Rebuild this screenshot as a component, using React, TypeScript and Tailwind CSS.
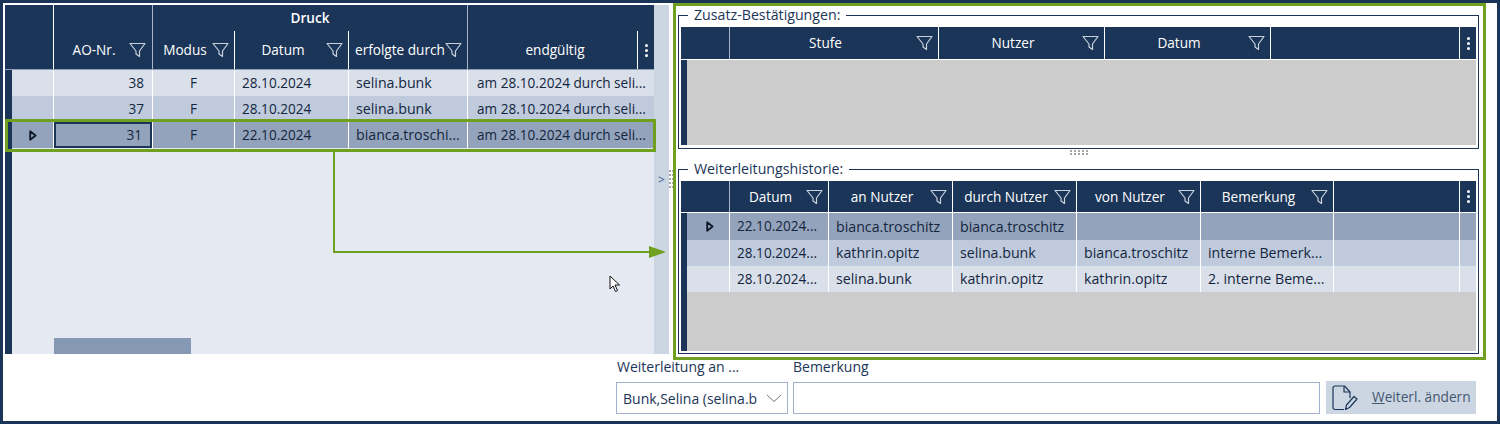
const FilterIcon = () => (
  <svg width="17" height="16" viewBox="0 0 17 16" fill="none" className="shrink-0 -ml-[5px] mr-[5px]">
    <path d="M1 1.500h15L10.500 9v5.500L7 12V9z" stroke="#c9d1dc" strokeWidth="1.2" strokeLinejoin="round" />
  </svg>
);

const MenuDots = () => (
  <div className="flex w-full h-full flex-col items-center justify-center gap-[2px]">
    <span className="w-[3px] h-[3px] bg-white rounded-full" />
    <span className="w-[3px] h-[3px] bg-white rounded-full" />
    <span className="w-[3px] h-[3px] bg-white rounded-full" />
  </div>
);

const RowMarker = () => (
  <svg width="8" height="11" viewBox="0 0 8 11" fill="none">
    <path d="M1.200 1.200v8.600L6.600 5.500z" stroke="#111827" strokeWidth="1.800" strokeLinejoin="round" />
  </svg>
);

const HeadCell = ({ label, w, filter = true, sep = 'border-white' }: { label: string; w: number; filter?: boolean; sep?: string }) => (
  <div className={`flex items-center h-full border-r shrink-0 ${sep}`} style={{ width: w }}>
    <span className="flex-1 text-center whitespace-nowrap text-white text-[13.6px] mt-[1px]">{label}</span>
    {filter && <FilterIcon />}
  </div>
);

const DataRow = ({ cells, widths, bg, marker, first }: { cells: string[]; widths: number[]; bg: string; marker?: boolean; first?: boolean }) => (
  <div className={`flex shrink-0 ${first ? 'h-[27px]' : 'h-[26px]'} ${bg}`}>
    {cells.map((c, i) => (
      <div
        key={i}
        className={`border-r border-white flex items-center px-[7px] shrink-0 overflow-hidden ${i === 0 ? 'justify-center' : ''}`}
        style={{ width: widths[i] }}
      >
        {i === 0 && marker ? (
          <span className="ml-[3px]"><RowMarker /></span>
        ) : (
          <span className={`truncate font-medium text-[#14263f] ${/^\d\d\./.test(c) ? 'text-[13.6px]' : 'text-[14.2px]'}`}>{c}</span>
        )}
      </div>
    ))}
  </div>
);

const LeftRow = ({ no, date, by, bg, active }: { no: string; date: string; by: string; bg: string; active?: boolean }) => (
  <div className={`flex h-[26px] shrink-0 text-[13.6px] font-medium text-[#14263f] ${bg}`}>
    <div className="w-[42px] shrink-0 border-r border-white flex items-center justify-center pl-[1px]">
      {active && <RowMarker />}
    </div>
    <div className="w-[99px] shrink-0 border-r border-white flex items-center">
      <div className={`w-full h-full flex items-center justify-end pr-[8px] ${active ? 'border-2 border-[#1b3558]' : ''}`}>{no}</div>
    </div>
    <div className="w-[82px] shrink-0 border-r border-white flex items-center justify-center">F</div>
    <div className="w-[114px] shrink-0 border-r border-white flex items-center px-[7px]">{date}</div>
    <div className="w-[119px] shrink-0 border-r border-white flex items-center pl-[7px] text-[14.2px] whitespace-nowrap">{by}</div>
    <div className="flex-1 min-w-0 flex items-center pl-[9px] whitespace-nowrap">am 28.10.2024 durch seli...</div>
  </div>
);

const LeftPanel = () => (
  <div className="relative w-[649px] h-[349px] mt-[2px] flex flex-col bg-[#1b3558] shrink-0">
    <div className="flex h-[65px] shrink-0 border-b border-[#8fa0b8]">
      <div className="w-[49px] border-r border-white shrink-0" />
      <div className="w-[99px] border-r border-[#a9b5c6] shrink-0 pt-[26px]">
        <HeadCell label="AO-Nr." w={98} sep="border-transparent" />
      </div>
      <div className="w-[315px] border-r border-[#a9b5c6] shrink-0 flex flex-col">
        <div className="h-[26px] flex items-center justify-center text-white text-[13.6px] font-semibold">Druck</div>
        <div className="flex flex-1 min-h-0">
          <HeadCell label="Modus" w={82} />
          <HeadCell label="Datum" w={114} />
          <div className="flex items-center flex-1 min-w-0">
            <span className="flex-1 pl-[6px] whitespace-nowrap text-white text-[13.6px] mt-[1px]">erfolgte durch</span>
            <FilterIcon />
          </div>
        </div>
      </div>
      <div className="flex-1 min-w-0 pt-[26px] flex">
        <div className="w-[170px] border-r border-white flex items-center justify-center pl-[5px] text-white text-[13.6px]">
          <span className="mt-[1px]">endgültig</span>
        </div>
        <div className="flex-1"><MenuDots /></div>
      </div>
    </div>
    <div className="flex-1 min-h-0 ml-[7px] bg-[#e4e9f2] relative">
      <LeftRow no="38" date="28.10.2024" by="selina.bunk" bg="bg-[#d9e0ea]" />
      <LeftRow no="37" date="28.10.2024" by="selina.bunk" bg="bg-[#bfcbdc]" />
      <LeftRow no="31" date="22.10.2024" by="bianca.troschi..." bg="bg-[#93a3bb]" active />
      <div className="absolute bottom-0 left-[42px] w-[137px] h-[16px] bg-[#8599b4]" />
    </div>

    {/* green annotation over the selected row */}
    <div className="absolute left-0 top-[114px] w-[651px] h-[33px] border-[3px] border-[#70a020]" />
    <svg className="absolute left-[327px] top-[147px] overflow-visible" width="335" height="110" fill="none">
      <path d="M2 0v100h316" stroke="#70a020" strokeWidth="2" />
      <path d="M317 94l17 6-17 6z" fill="#70a020" />
    </svg>
    <svg className="absolute left-[604px] top-[270px]" width="12" height="18" viewBox="0 0 12 18">
      <path d="M1 1v13l3-3 2.500 5.500 2-1L6 10h4.500z" fill="#fff" stroke="#111" strokeWidth="1" strokeLinejoin="round" />
    </svg>
  </div>
);

const Splitter = () => (
  <div className="w-[15px] h-[349px] mt-[2px] bg-[#ccd6e3] flex items-center justify-center shrink-0">
    <span className="text-[12px] text-[#3f5f8f]">&gt;</span>
  </div>
);

const Dots = ({ vertical }: { vertical?: boolean }) => (
  <div className={`flex gap-[2px] ${vertical ? 'flex-col' : ''}`}>
    {[0, 1, 2, 3, 4].map((i) => (
      <div key={i} className={`flex gap-[1px] ${vertical ? '' : 'flex-col'}`}>
        <span className="w-[2px] h-[2px] bg-[#a5a5a5]" />
        <span className="w-[2px] h-[2px] bg-[#a5a5a5]" />
      </div>
    ))}
  </div>
);

const GridTable = ({
  heads,
  widths,
  rows,
  height,
  headHeight,
}: {
  heads: string[];
  widths: number[];
  rows: { cells: string[]; bg: string; marker?: boolean }[];
  height: number;
  headHeight: number;
}) => {
  const bodyWidths = widths.map((w, i) => (i === 0 ? w - 6 : w));
  return (
    <div className="flex flex-col bg-[#1b3558]" style={{ height }}>
      <div className="flex shrink-0 border-b border-white" style={{ height: headHeight }}>
        <div className="shrink-0 border-r border-[#a9b5c6]" style={{ width: widths[0] }} />
        {heads.map((h, i) => (
          <HeadCell key={i} label={h} w={widths[i + 1]} />
        ))}
        <div className="shrink-0 border-r border-white" style={{ width: widths[heads.length + 1] }} />
        <div className="flex-1"><MenuDots /></div>
      </div>
      <div className="flex-1 min-h-0 ml-[6px] bg-[#cccccc] flex flex-col">
        {rows.map((r, i) => (
          <DataRow key={i} cells={r.cells} widths={bodyWidths} bg={r.bg} marker={r.marker} first={i === 0} />
        ))}
      </div>
    </div>
  );
};

const Group = ({ title, height, children }: { title: string; height: number; children: React.ReactNode }) => (
  <fieldset className="border border-[#1b3558] ml-[2px] w-[801px] px-[2px] pt-[3px] pb-[2px] shrink-0" style={{ height }}>
    <legend className="ml-[7px] px-[6px] text-[14.2px] leading-[18px] text-[#1b3558]">{title}</legend>
    {children}
  </fieldset>
);

const RightPanel = () => (
  <div className="w-[813px] h-[357px] border-[3px] border-[#70a020] bg-white flex flex-col shrink-0">
    <Group title="Zusatz-Bestätigungen:" height={143}>
      <GridTable heads={['Stufe', 'Nutzer', 'Datum']} widths={[49, 209, 166, 166, 189]} rows={[]} height={118} headHeight={33} />
    </Group>
    <div className="h-[11px] shrink-0 flex justify-center pt-[1px] pr-[2px]">
      <Dots />
    </div>
    <Group title="Weiterleitungshistorie:" height={194}>
      <GridTable
        heads={['Datum', 'an Nutzer', 'durch Nutzer', 'von Nutzer', 'Bemerkung']}
        widths={[49, 99, 124, 124, 124, 133, 126]}
        height={170}
        headHeight={32}
        rows={[
          { cells: ['', '22.10.2024...', 'bianca.troschitz', 'bianca.troschitz', '', '', ''], bg: 'bg-[#93a3bb]', marker: true },
          { cells: ['', '28.10.2024...', 'kathrin.opitz', 'selina.bunk', 'bianca.troschitz', 'interne Bemerk...', ''], bg: 'bg-[#bfcbdc]' },
          { cells: ['', '28.10.2024...', 'selina.bunk', 'kathrin.opitz', 'kathrin.opitz', '2. interne Beme...', ''], bg: 'bg-[#d9e0ea]' },
        ]}
      />
    </Group>
  </div>
);

const BottomForm = () => (
  <div className="flex items-start pl-[613px] text-[14px] text-[#1b3558]">
    <div className="w-[172px] shrink-0">
      <div className="h-[22px] flex items-center pl-[1px] pb-[10px] whitespace-nowrap">Weiterleitung an ...</div>
      <div className="h-[32px] border border-[#a3b2cb] flex items-center pl-[6px] pr-[5px] gap-[7px] bg-white">
        <span className="flex-1 whitespace-nowrap overflow-hidden">Bunk,Selina (selina.b</span>
        <svg width="16" height="9" viewBox="0 0 16 9" fill="none" className="shrink-0">
          <path d="M1 1l7 6.500L15 1" stroke="#6b7280" strokeWidth="1" />
        </svg>
      </div>
    </div>
    <div className="w-[527px] ml-[5px] shrink-0">
      <div className="h-[22px] flex items-center pb-[10px] whitespace-nowrap">Bemerkung</div>
      <div className="h-[32px] border border-[#a3b2cb] bg-white" />
    </div>
    <div className="mt-[21px] ml-[6px] w-[150px] h-[33px] bg-[#ccd6e3] flex items-center pl-[6px] shrink-0">
      <svg width="28" height="26" viewBox="0 0 28 26" fill="none" stroke="#1b3558" strokeWidth="1.200" strokeLinejoin="round">
        <path d="M12 24.500H3a2 2 0 0 1-2-2V3a2 2 0 0 1 2-2h9.500L18 7v6" />
        <path d="M12 1.500V7h6" />
        <path d="M13.500 24.500l1-4.500 7.500-8.500 3 2.500-7.500 8.500z" />
      </svg>
      <span className="ml-[12px] text-[13.7px] text-[#44566f] whitespace-nowrap"><span className="underline">W</span>eiterl. ändern</span>
    </div>
  </div>
);

export default function App() {
  return (
    <div className="w-[1500px] h-[424px] border-[3px] border-[#1b3558] bg-white overflow-hidden relative font-['Open_Sans',sans-serif]">
      <div className="flex items-start h-[357px] pl-[2px]">
        <LeftPanel />
        <Splitter />
        <div className="w-[4px] h-[357px] flex justify-center pt-[167px] shrink-0">
          <Dots vertical />
        </div>
        <RightPanel />
      </div>
      <BottomForm />
    </div>
  );
}
